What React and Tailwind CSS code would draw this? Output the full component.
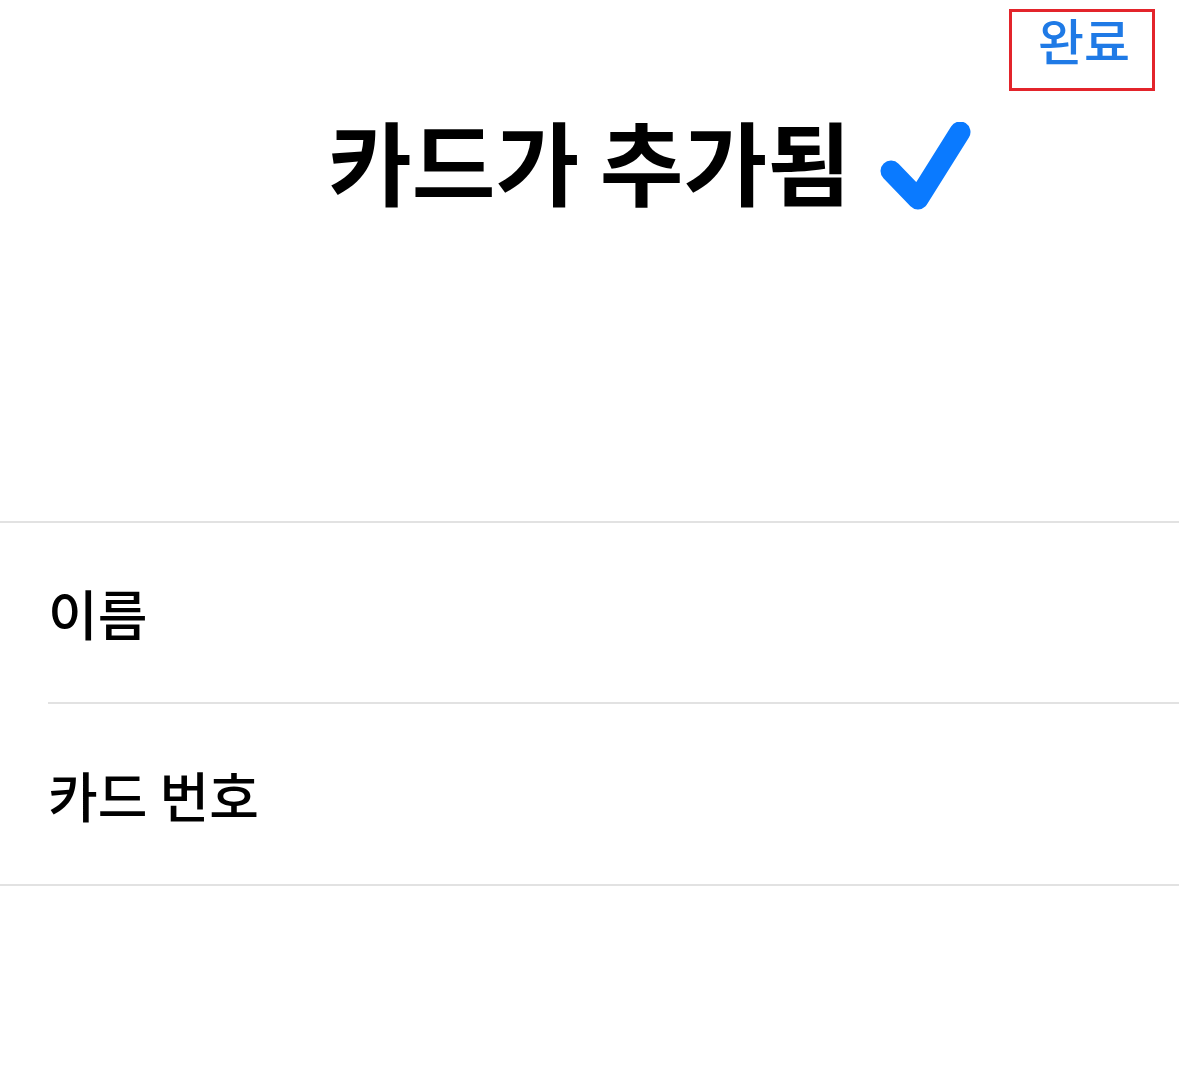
const App = () => {
  return (
    <div
      className="relative w-full h-[1082px] bg-white overflow-hidden"
      style={{ fontFamily: '"Noto Sans CJK KR", "Noto Sans", sans-serif' }}
    >
      <div className="flex justify-end pr-[24px] pt-[9px]">
        <div className="w-[146px] h-[82px] border-[3px] border-[#e3242b] flex justify-center">
          <span className="text-[50px] leading-[54px] text-[#1f7ae6] font-medium pl-[4px]">완료</span>
        </div>
      </div>

      <div className="flex justify-center mt-[14px]">
        <span className="relative text-[91px] leading-[108px] font-bold text-black">
          카드가 추가됨
          <svg
            className="absolute left-[calc(100%+29px)] top-[17px]"
            width="92"
            height="92"
            viewBox="0 0 92 92"
          >
            <path
              d="M11 49 L38 77 L80 10"
              fill="none"
              stroke="#0a7aff"
              strokeWidth="21"
              strokeLinecap="round"
              strokeLinejoin="round"
            />
          </svg>
        </span>
      </div>

      <div className="mt-[308px] border-t-2 border-[#e2e2e2]">
        <div className="h-[181px] flex items-center ml-[48px] border-b-2 border-[#e2e2e2]">
          <span className="text-[54px] font-medium text-black">이름</span>
        </div>
        <div className="h-[180px] flex items-center pl-[48px]">
          <span className="text-[54px] font-medium text-black">카드 번호</span>
        </div>
      </div>
      <div className="border-t-2 border-[#e2e2e2]" />
    </div>
  );
};

export default App;
